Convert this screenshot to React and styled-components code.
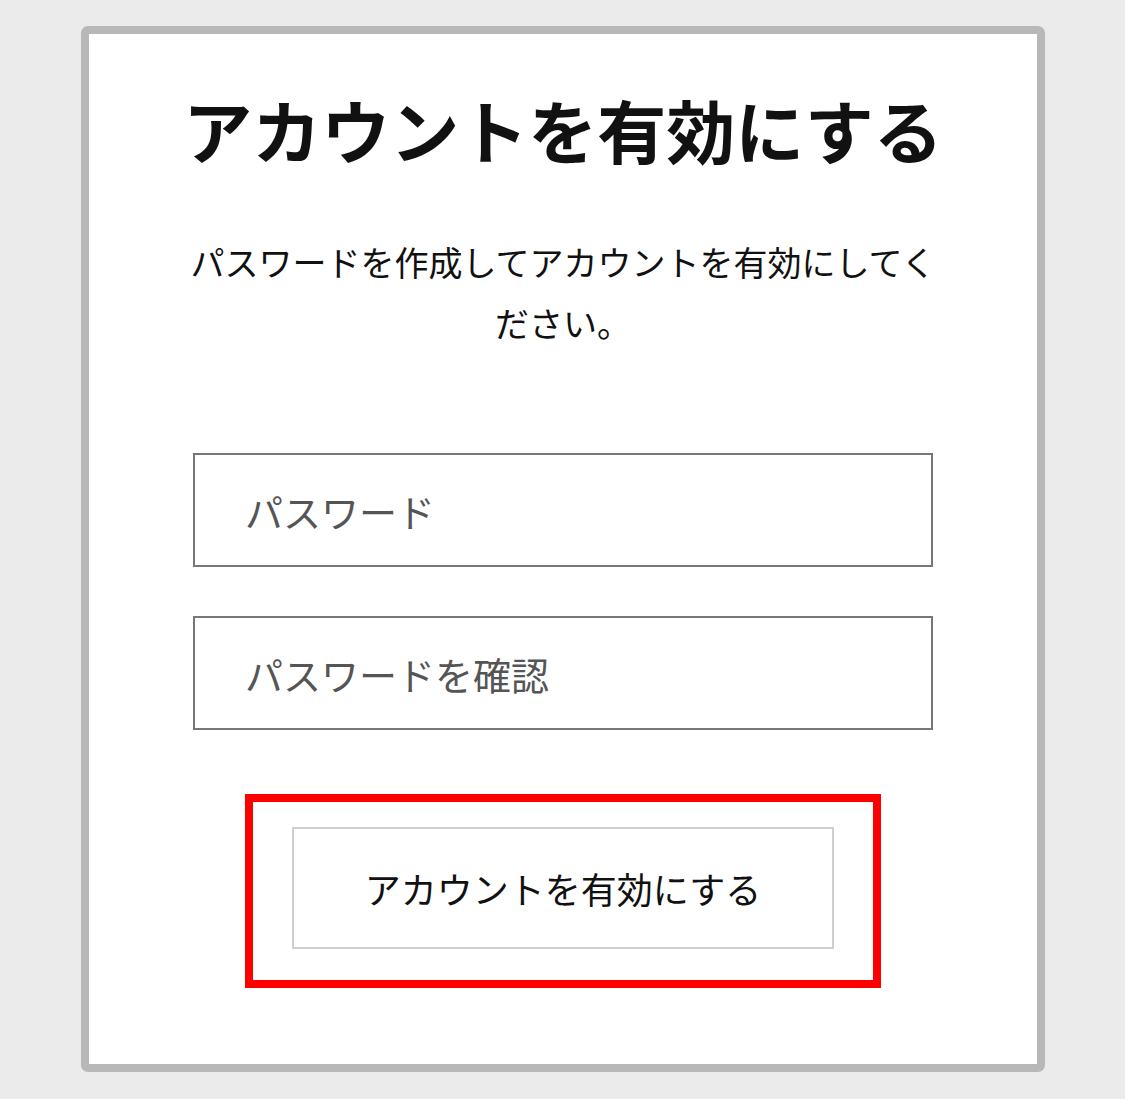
import React from "react";
import styled, { createGlobalStyle } from "styled-components";

const GlobalStyle = createGlobalStyle`
  html, body {
    margin: 0;
    padding: 0;
    background: #ebebeb;
  }
  * {
    box-sizing: border-box;
  }
  body {
    font-family: "Noto Sans CJK JP", "Noto Sans", sans-serif;
    color: #111;
  }
`;

const Page = styled.div`
  width: 1125px;
  height: 1099px;
  padding: 26px 0 0 81px;
`;

const Card = styled.div`
  width: 964px;
  height: 1046px;
  background: #fff;
  border: 8px solid #b8b8b8;
  border-radius: 7px;
  display: flex;
  flex-direction: column;
  align-items: center;
  padding-top: 55px;
`;

const Title = styled.h1`
  margin: 0;
  font-size: 69px;
  font-weight: 700;
  line-height: 80px;
  color: #111;
`;

const Lead = styled.p`
  margin: 62px 0 0;
  width: 752px;
  text-align: center;
  font-size: 34px;
  line-height: 61px;
  color: #111;
`;

const Form = styled.form`
  margin-top: 100px;
  display: flex;
  flex-direction: column;
  align-items: center;
  gap: 49px;
`;

const Field = styled.input`
  width: 740px;
  height: 114px;
  border: 2px solid #777;
  border-radius: 0;
  padding: 0 0 0 50px;
  font-family: inherit;
  font-size: 38px;
  color: #333;
  outline: none;

  &::placeholder {
    color: #555;
  }
`;

const Highlight = styled.div`
  margin-top: 15px;
  width: 636px;
  padding: 25px 38px 31px 39px;
  border: 8px solid #ff0000;
`;

const Submit = styled.button`
  display: block;
  width: 542px;
  height: 122px;
  background: #fff;
  border: 2px solid #cfcfcf;
  font-family: inherit;
  font-size: 36px;
  color: #111;
  cursor: pointer;
`;

export default function App() {
  return (
    <>
      <GlobalStyle />
      <Page>
        <Card>
          <Title>アカウントを有効にする</Title>
          <Lead>パスワードを作成してアカウントを有効にしてください。</Lead>
          <Form onSubmit={(e) => e.preventDefault()}>
            <Field type="password" placeholder="パスワード" />
            <Field type="password" placeholder="パスワードを確認" />
            <Highlight>
              <Submit type="submit">アカウントを有効にする</Submit>
            </Highlight>
          </Form>
        </Card>
      </Page>
    </>
  );
}
